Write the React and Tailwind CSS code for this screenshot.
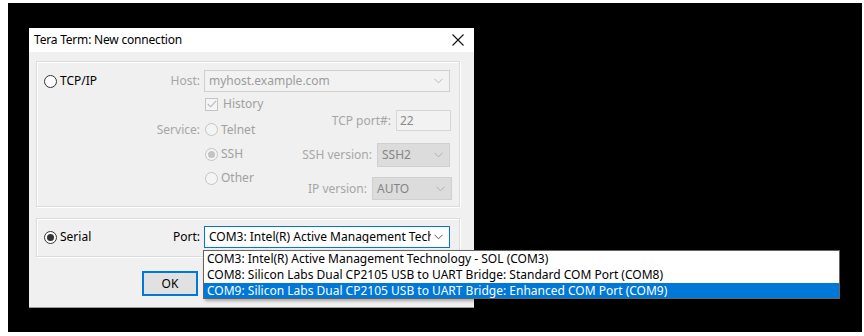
import React from "react";

const font = { fontFamily: '"Noto Sans", "Open Sans", sans-serif' };

function Chevron({ color = "#a0a0a0" }) {
  return (
    <svg width="9" height="6" viewBox="0 0 9 6" className="shrink-0">
      <polyline points="0.5,0.8 4.5,4.8 8.5,0.8" fill="none" stroke={color} strokeWidth="1" />
    </svg>
  );
}

function Radio({ checked, disabled }) {
  const border = disabled ? "border-[#c4c4c4]" : "border-[#333333]";
  const bg = disabled ? "bg-[#f4f4f4]" : "bg-white";
  return (
    <div className={`w-[13px] h-[13px] rounded-full border ${border} ${bg} flex items-center justify-center shrink-0`}>
      {checked && (
        <div className={`w-[7px] h-[7px] rounded-full ${disabled ? "bg-[#c4c4c4]" : "bg-[#333333]"}`} />
      )}
    </div>
  );
}

export default function App() {
  return (
    <div className="w-[864px] h-[336px] bg-white pt-[3px] pl-[8px] pr-[2px] pb-[4px] overflow-hidden" style={font}>
      <div className="bg-black w-full h-full pl-[21px] pt-[25px] relative">
        {/* Dialog */}
        <div className="w-[445px] h-[280px] bg-[#f0f0f0] border-b border-[#9a9a9a] flex flex-col text-[12px] leading-none">
          {/* Title bar */}
          <div className="h-[24px] bg-white flex items-center justify-between pl-[5px] pr-[10px]">
            <span className="text-[12px] text-black tracking-[-0.2px]">Tera Term: New connection</span>
            <svg width="12" height="12" viewBox="0 0 12 12">
              <path d="M0.5 0.5 L11.5 11.5 M11.5 0.5 L0.5 11.5" stroke="#111" strokeWidth="1.1" />
            </svg>
          </div>

          {/* Group TCP/IP */}
          <div className="ml-[7px] mt-[9px] w-[424px] h-[146px] border border-[#dcdcdc] shadow-[inset_1px_1px_0_#ffffff,1px_1px_0_#ffffff] pt-[8px]">
            {/* Host row */}
            <div className="flex items-center h-[22px]">
              <div className="w-[163px] flex items-center justify-between pl-[7px]">
                <div className="flex items-center gap-[3px]">
                  <Radio />
                  <span className="text-black text-[12px]">TCP/IP</span>
                </div>
                <span className="text-[#a6a6a6]">Host:</span>
              </div>
              <div className="ml-[4px] w-[246px] h-[22px] border border-[#d0d0d0] bg-[#f2f2f2] flex items-center justify-between pl-[4px] pr-[6px]">
                <span className="text-[#9c9c9c]">myhost.example.com</span>
                <Chevron color="#b8b8b8" />
              </div>
            </div>

            {/* Lower area */}
            <div className="flex mt-[6px]">
              {/* labels column */}
              <div className="w-[163px] flex flex-col items-end pt-[19px]">
                <div className="h-[25px] flex items-center text-[#a6a6a6]">Service:</div>
              </div>
              {/* middle column */}
              <div className="ml-[5px] flex flex-col">
                <div className="h-[12px] flex items-center gap-[5px]">
                  <div className="w-[13px] h-[13px] border border-[#c4c4c4] bg-[#f4f4f4] flex items-center justify-center">
                    <svg width="10" height="8" viewBox="0 0 10 8">
                      <polyline points="0.8,4 3.6,6.8 9.2,0.8" fill="none" stroke="#b8b8b8" strokeWidth="1.1" />
                    </svg>
                  </div>
                  <span className="text-[#a0a0a0]">History</span>
                </div>
                <div className="mt-[7px] flex flex-col">
                  <div className="h-[25px] flex items-center gap-[3px]">
                    <Radio disabled />
                    <span className="text-[#a0a0a0]">Telnet</span>
                  </div>
                  <div className="h-[24px] flex items-center gap-[3px]">
                    <Radio disabled checked />
                    <span className="text-[#a0a0a0]">SSH</span>
                  </div>
                  <div className="h-[24px] flex items-center gap-[3px]">
                    <Radio disabled />
                    <span className="text-[#a0a0a0]">Other</span>
                  </div>
                </div>
              </div>
              {/* right column */}
              <div className="flex-1 flex flex-col items-end pt-[12px]">
                <div className="flex items-center gap-[5px] mr-[8px]">
                  <span className="text-[#a6a6a6]">TCP port#:</span>
                  <div className="w-[55px] h-[21px] border border-[#d6d6d6] bg-[#f2f2f2] flex items-center pl-[3px] text-[#8a8a8a]">22</div>
                </div>
                <div className="flex items-center gap-[5px] mr-[9px] mt-[12px]">
                  <span className="text-[#a6a6a6]">SSH version:</span>
                  <div className="w-[73px] h-[24px] bg-[#dcdcdc] border border-[#d0d0d0] flex items-center justify-between pl-[4px] pr-[6px]">
                    <span className="text-[#858585]">SSH2</span>
                    <Chevron color="#b0b0b0" />
                  </div>
                </div>
                <div className="flex items-center gap-[5px] mr-[7px] mt-[10px]">
                  <span className="text-[#a6a6a6]">IP version:</span>
                  <div className="w-[80px] h-[23px] bg-[#dcdcdc] border border-[#d0d0d0] flex items-center justify-between pl-[4px] pr-[6px]">
                    <span className="text-[#858585]">AUTO</span>
                    <Chevron color="#b0b0b0" />
                  </div>
                </div>
              </div>
            </div>
          </div>

          {/* Group Serial */}
          <div className="ml-[7px] mt-[11px] w-[424px] h-[39px] border border-[#dcdcdc] shadow-[inset_1px_1px_0_#ffffff,1px_1px_0_#ffffff] pt-[7px]">
            <div className="flex items-center h-[22px]">
              <div className="w-[163px] flex items-center justify-between pl-[7px]">
                <div className="flex items-center gap-[3px]">
                  <Radio checked />
                  <span className="text-black">Serial</span>
                </div>
                <span className="text-black">Port:</span>
              </div>
              <div className="ml-[4px] w-[246px] h-[22px] border border-[#0078d7] bg-white flex items-center pl-[4px] pr-[6px]">
                <span className="text-black whitespace-nowrap overflow-hidden w-[222px] shrink-0">COM3: Intel(R) Active Management Technology - SOL (COM3)</span>
                <div className="ml-auto">
                  <Chevron color="#555555" />
                </div>
              </div>
            </div>
          </div>

          {/* Buttons */}
          <div className="ml-[113px] mt-[14px] flex">
            <div className="w-[56px] h-[25px] bg-[#e1e1e1] border-2 border-[#0078d7] flex items-center justify-center text-black">OK</div>
          </div>
        </div>

        {/* Dropdown list overlay */}
        <div className="absolute left-[195px] top-[247px] w-[637px] h-[49px] bg-white border border-[#646464] text-[12px] leading-none shadow-[2px_2px_3px_rgba(0,0,0,0.3)]" style={font}>
          <div className="h-[16px] flex items-center pl-[3px] text-black whitespace-nowrap">COM3: Intel(R) Active Management Technology - SOL (COM3)</div>
          <div className="h-[16px] flex items-center pl-[3px] text-black whitespace-nowrap">COM8: Silicon Labs Dual CP2105 USB to UART Bridge: Standard COM Port (COM8)</div>
          <div className="h-[15px] flex items-center pl-[3px] bg-[#0078d7] text-white whitespace-nowrap">COM9: Silicon Labs Dual CP2105 USB to UART Bridge: Enhanced COM Port (COM9)</div>
        </div>
      </div>
    </div>
  );
}
